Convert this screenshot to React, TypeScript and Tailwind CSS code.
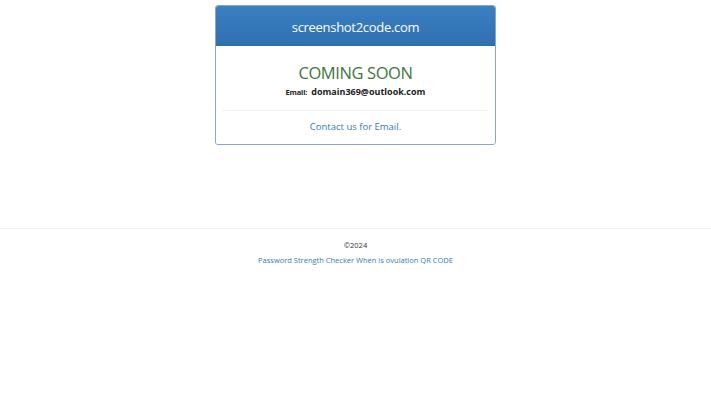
import React from "react";

export default function App() {
  return (
    <div className="min-h-[400px] bg-white" style={{ fontFamily: '"Open Sans", sans-serif' }}>
      <div className="pt-[5px] flex justify-center">
        <div className="w-[281px] rounded-[3px] border border-[#8aa6c6] overflow-hidden">
          <div className="h-[40px] pt-[4px] bg-gradient-to-b from-[#3b80c2] to-[#2f6fb0] flex items-center justify-center text-white text-[13px] tracking-[-0.3px]">
            screenshot2code.com
          </div>
          <div className="bg-white px-[7px] pt-[15px] pb-[9px] text-center">
            <div className="text-[#3c763d] text-[16.5px] tracking-[-0.4px] leading-[24px]">COMING SOON</div>
            <div className="flex items-center justify-center gap-[4px] font-bold text-[#222] leading-[14px]">
              <span className="text-[7.5px] tracking-[-0.2px]">Email:</span>
              <span className="text-[9px] tracking-[0px]">domain369@outlook.com</span>
            </div>
            <div className="border-t border-[#eee] mt-[11px] pt-[8px] text-[#337ab7] text-[9.5px] leading-[16px]">
              Contact us for Email.
            </div>
          </div>
        </div>
      </div>
      <div className="mt-[83px] border-t border-[#f2f2f2] pt-[9px] text-center text-[7.5px] leading-[15px]">
        <div className="text-[#333]">©2024</div>
        <div className="text-[#337ab7]">Password Strength Checker When is ovulation QR CODE</div>
      </div>
    </div>
  );
}
